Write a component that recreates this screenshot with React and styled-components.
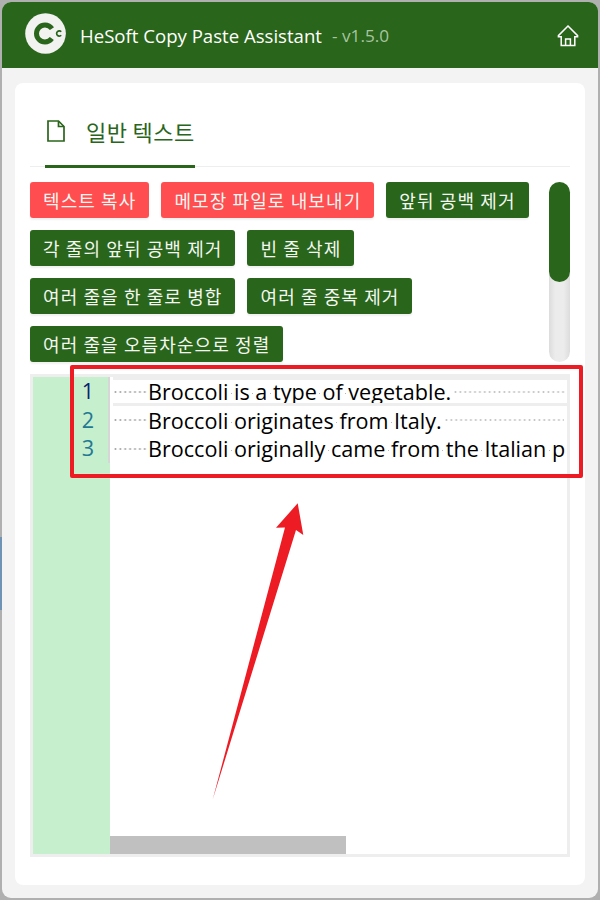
import React from 'react';
import styled, { createGlobalStyle } from 'styled-components';

const GREEN = '#29651a';
const RED = '#ed1c24';
const KR = '"Noto Sans CJK KR", "Noto Sans", sans-serif';
const UI = '"Open Sans", "Noto Sans", sans-serif';

const Global = createGlobalStyle`
  html, body { margin: 0; padding: 0; width: 600px; height: 900px; overflow: hidden; }
  body { font-family: ${UI}; }
`;

const Desktop = styled.div`
  position: relative;
  width: 600px;
  height: 900px;
  box-sizing: border-box;
  padding: 2px;
  background:
    linear-gradient(to bottom, transparent 537px, #6f93b4 537px, #6f93b4 610px, transparent 610px) left top / 2px 100% no-repeat,
    #b0b0b0;
`;

const Window = styled.div`
  height: 896px;
  display: flex;
  flex-direction: column;
  background: #f3f3f3;
  border-radius: 9px;
  overflow: hidden;
`;

const Header = styled.header`
  flex: 0 0 66px;
  display: flex;
  align-items: center;
  padding: 0 20px 0 23px;
  background: ${GREEN};
  color: #fff;
`;

const Logo = styled.svg`
  width: 41px;
  height: 41px;
  margin-right: 14px;
  margin-top: -3px;
`;

const Title = styled.span`
  font-family: ${UI};
  font-size: 18.6px;
  white-space: pre;
`;

const Version = styled.span`
  margin-left: 10px;
  font-size: 17.2px;
  color: #a8c4a0;
  white-space: pre;
`;

const HomeButton = styled.svg`
  width: 22px;
  height: 22px;
  margin-left: auto;
  margin-right: -1px;
  margin-top: 1px;
`;

const Card = styled.main`
  margin: 15px 13px 0;
  height: 802px;
  box-sizing: border-box;
  padding: 0 15px;
  display: flex;
  flex-direction: column;
  background: #fff;
  border-radius: 8px;
`;

const TabBar = styled.nav`
  flex: 0 0 84px;
  box-sizing: border-box;
  display: flex;
  align-items: flex-end;
  border-bottom: 1.5px solid #eeeeee;
`;

const Tab = styled.div`
  width: 150px;
  height: 84px;
  margin-left: 15px;
  margin-bottom: -1.5px;
  box-sizing: border-box;
  display: flex;
  align-items: center;
  padding: 14px 0 0 2px;
  border-bottom: 3px solid ${GREEN};
  color: ${GREEN};
  font-family: ${KR};
  font-size: 22px;
  letter-spacing: 0.4px;
  white-space: pre;
`;

const TabIcon = styled.svg`
  width: 18px;
  height: 22px;
  margin-right: 21px;
`;

const Tools = styled.section`
  margin-top: 15px;
  height: 180px;
  display: flex;
  justify-content: space-between;
`;

const ButtonWrap = styled.div`
  width: 510px;
  display: flex;
  flex-wrap: wrap;
  align-content: flex-start;
  gap: 12px;
`;

const Button = styled.button`
  height: 36px;
  padding: 0 13px;
  border: 0;
  border-radius: 3px;
  background: ${(p) => (p.$danger ? '#ff4d50' : GREEN)};
  color: #f4f7f2;
  font-family: ${KR};
  font-size: 18px;
  letter-spacing: 1.1px;
  line-height: 34px;
  white-space: pre;
  box-shadow: 0 2px 2px rgba(0, 0, 0, 0.06);
`;

const Track = styled.div`
  width: 21px;
  height: 180px;
  border-radius: 10.5px;
  background: linear-gradient(to right, #dcdcdc, #ececec 30%, #ececec 70%, #dcdcdc);
`;

const Thumb = styled.div`
  height: 100px;
  border-radius: 10.5px;
  background: ${GREEN};
`;

const Editor = styled.section`
  position: relative;
  margin-top: 12px;
  height: 483px;
  box-sizing: border-box;
  display: flex;
  border: 3px solid #eeeeee;
  background: #fff;
  overflow: hidden;
`;

const Gutter = styled.div`
  flex: 0 0 77px;
  background: #c6efce;
`;

const Numbers = styled.div`
  height: 86px;
  box-sizing: border-box;
  border-right: 2px solid #d6d6d6;
  padding-right: 14px;
  text-align: right;
  font-size: 21.6px;
  line-height: 28.6px;
`;

const Num = styled.div`
  color: ${(p) => (p.$current ? '#0b216f' : '#237893')};
`;

const Code = styled.div`
  flex: 1;
  min-width: 0;
  padding-left: 3px;
  font-size: 21.6px;
  color: #000;
`;

const Line = styled.div`
  height: 28.6px;
  display: flex;
  align-items: center;
  white-space: pre;
  overflow: hidden;
  ${(p) =>
    p.$current &&
    `
    height: 29px;
    box-sizing: border-box;
    border-top: 3px solid #eeeeee;
    border-bottom: 3px solid #eeeeee;
  `}
`;

const Lead = styled.span`
  flex: 0 0 35px;
  height: 4px;
  background-image: radial-gradient(circle, #a8a8a8 0.9px, transparent 1.2px);
  background-size: 4.9px 4px;
  background-repeat: repeat-x;
`;

const Trail = styled.span`
  flex: 0 1 ${(p) => p.$w}px;
  height: 4px;
  margin-left: 2px;
  background-image: radial-gradient(circle, #c4c4c4 0.9px, transparent 1.2px);
  background-size: 4.9px 4px;
  background-repeat: repeat-x;
`;

const Text = styled.span`
  flex: none;
`;

const Blank = styled.span`
  background-image: radial-gradient(circle, #b5b5b5 0.8px, transparent 1px);
  background-size: 3px 3px;
  background-repeat: no-repeat;
  background-position: center 58%;
`;

const HScroll = styled.div`
  position: absolute;
  left: 77px;
  bottom: 0;
  width: 236px;
  height: 18px;
  background: #c0c0c0;
`;

const Callout = styled.div`
  position: absolute;
  left: 70px;
  top: 365px;
  width: 513px;
  height: 113px;
  box-sizing: border-box;
  border: 4px solid ${RED};
  border-radius: 2px;
  pointer-events: none;
`;

const ArrowLayer = styled.svg`
  position: absolute;
  left: 0;
  top: 0;
  width: 600px;
  height: 900px;
  pointer-events: none;
`;

const buttons = [
  ['텍스트 복사', true],
  ['메모장 파일로 내보내기', true],
  ['앞뒤 공백 제거'],
  ['각 줄의 앞뒤 공백 제거'],
  ['빈 줄 삭제'],
  ['여러 줄을 한 줄로 병합'],
  ['여러 줄 중복 제거'],
  ['여러 줄을 오름차순으로 정렬'],
];

const lines = [
  { t: 'Broccoli is a type of vegetable.', trail: 112, current: true },
  { t: 'Broccoli originates from Italy.', trail: 120 },
  { t: 'Broccoli originally came from the Italian p', trail: 0 },
];

function Spaced({ text }) {
  const words = text.split(' ');
  return (
    <Text>
      {words.map((w, i) => (
        <React.Fragment key={i}>
          {w}
          {i < words.length - 1 && <Blank> </Blank>}
        </React.Fragment>
      ))}
    </Text>
  );
}

export default function App() {
  return (
    <Desktop>
      <Global />
      <Window>
        <Header>
          <Logo viewBox="0 0 41 41">
            <circle cx="20.5" cy="20.5" r="20.3" fill="#f2f2f0" />
            <circle cx="20" cy="20.5" r="8.5" fill="none" stroke={GREEN} strokeWidth="5" strokeDasharray="42.5 10.9" strokeDashoffset="-5.4" />
            <circle cx="34" cy="20.5" r="6.4" fill="#f2f2f0" />
            <path d="M36.2 18.8a2.6 2.6 0 1 0 0 3.4" fill="none" stroke={GREEN} strokeWidth="1.7" />
          </Logo>
          <Title>HeSoft Copy Paste Assistant</Title>
          <Version>- v1.5.0</Version>
          <HomeButton viewBox="0 0 22 22" fill="none" stroke="#fff" strokeWidth="1.5">
            <path d="M11 1 1.4 10.6V11.7H4.2V20.6H17.8V11.7H20.6V10.6Z" strokeLinejoin="miter" />
            <path d="M8.6 20.6V14H13.4V20.6" />
          </HomeButton>
        </Header>
        <Card>
          <TabBar>
            <Tab>
              <TabIcon viewBox="0 0 18 22" fill="none" stroke={GREEN} strokeWidth="1.7">
                <path d="M1 1H11.5L17 6.5V21H1Z" />
                <path d="M11.5 1V6.5H17" />
              </TabIcon>
              일반 텍스트
            </Tab>
          </TabBar>
          <Tools>
            <ButtonWrap>
              {buttons.map(([label, danger]) => (
                <Button key={label} $danger={danger}>{label}</Button>
              ))}
            </ButtonWrap>
            <Track>
              <Thumb />
            </Track>
          </Tools>
          <Editor>
            <Gutter>
              <Numbers>
                {lines.map((l, i) => (
                  <Num key={i} $current={l.current}>{i + 1}</Num>
                ))}
              </Numbers>
            </Gutter>
            <Code>
              {lines.map((l, i) => (
                <Line key={i} $current={l.current}>
                  <Lead />
                  <Spaced text={l.t} />
                  {l.trail > 0 && <Trail $w={l.trail} />}
                </Line>
              ))}
            </Code>
            <HScroll />
          </Editor>
        </Card>
      </Window>
      <Callout />
      <ArrowLayer viewBox="0 0 600 900">
        <polygon points="212.7,799.5 285,527.4 276,527.7 297.7,503.3 303.3,535 296,530" fill={RED} />
      </ArrowLayer>
    </Desktop>
  );
}
